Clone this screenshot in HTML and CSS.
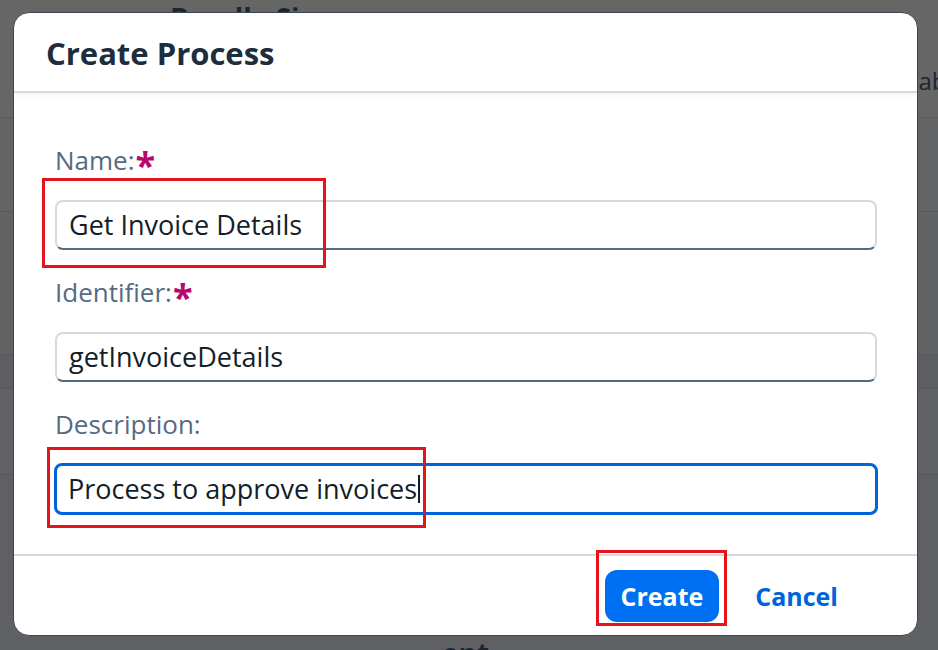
FILE: index.html
```html
<!DOCTYPE html>
<html lang="en">
<head>
<meta charset="utf-8">
<title>Create Process</title>
<link rel="stylesheet" href="styles.css">
</head>
<body>
<div class="backdrop">
  <div class="bg-row bg-head">
    <span class="bg-title">Bundle Sizes</span>
    <span class="bg-side">Table</span>
  </div>
  <div class="bg-row bg-r2"></div>
  <div class="bg-row bg-r3"></div>
  <div class="bg-row bg-band"></div>
  <div class="bg-row bg-r5"></div>
  <div class="bg-row bg-foot"><span class="bg-bottom">ent</span></div>
</div>

<div class="dialog" role="dialog" aria-labelledby="dlg-title">
  <header class="dlg-header">
    <h1 class="dlg-title" id="dlg-title">Create Process</h1>
  </header>
  <div class="dlg-content">
    <div class="field">
      <label class="field-label">Name:<span class="req">*</span></label>
      <div class="input"><span class="input-text">Get Invoice Details</span></div>
    </div>
    <div class="field">
      <label class="field-label">Identifier:<span class="req">*</span></label>
      <div class="input"><span class="input-text">getInvoiceDetails</span></div>
    </div>
    <div class="field">
      <label class="field-label">Description:</label>
      <div class="input input-focused"><span class="input-text">Process to approve invoices</span><span class="caret"></span></div>
    </div>
  </div>
  <footer class="dlg-footer">
    <button class="btn btn-primary" type="button">Create</button>
    <button class="btn btn-transparent" type="button">Cancel</button>
  </footer>
</div>

<div class="mark mark-name"></div>
<div class="mark mark-desc"></div>
<div class="mark mark-create"></div>
</body>
</html>
```

FILE: styles.css
```css
html, body {
  margin: 0;
  padding: 0;
}

body {
  width: 938px;
  height: 650px;
  overflow: hidden;
  position: relative;
  background: #626365;
  font-family: "Open Sans", "Noto Sans", sans-serif;
}

/* ---------- dimmed page behind the dialog ---------- */
.backdrop {
  width: 938px;
  height: 650px;
  display: flex;
  flex-direction: column;
}

.bg-row {
  box-sizing: border-box;
  border-bottom: 1px solid #56585b;
  flex-shrink: 0;
}

.bg-head {
  height: 118px;
  background: #666666;
  display: flex;
  justify-content: space-between;
  align-items: flex-start;
}

.bg-title {
  margin-left: 170px;
  padding-top: 2px;
  font-weight: 700;
  font-size: 28px;
  line-height: 32px;
  color: #1d2630;
}

.bg-side {
  flex-shrink: 0;
  margin-top: 65px;
  margin-right: -28px;
  font-size: 24px;
  line-height: 32px;
  color: #1d2630;
}

.bg-r2 {
  height: 94px;
  background: #636466;
}

.bg-r3 {
  height: 143px;
  background: #626365;
}

.bg-band {
  height: 34px;
  background: #5c5e61;
}

.bg-r5 {
  height: 86px;
  background: #606265;
}

.bg-foot {
  flex: 1;
  border-bottom: 0;
  background: #5e6063;
  padding-top: 162px;
  padding-left: 442px;
}

.bg-bottom {
  font-weight: 700;
  font-size: 28px;
  line-height: 32px;
  color: #1d2630;
}

/* ---------- dialog ---------- */
.dialog {
  position: absolute;
  left: 13px;
  top: 12px;
  width: 905px;
  height: 624px;
  box-sizing: border-box;
  border: 1px solid #3c4450;
  border-radius: 16px;
  background: #ffffff;
  display: flex;
  flex-direction: column;
  overflow: hidden;
}

.dlg-header {
  padding: 22px 32px 20px 32px;
  border-bottom: 2px solid #dadada;
  box-shadow: 0 2px 5px rgba(0, 0, 0, 0.05);
}

.dlg-title {
  margin: 0;
  font-weight: 700;
  font-size: 31px;
  line-height: 36px;
  color: #1d2d3e;
}

.dlg-content {
  flex: 1;
  padding: 49px 40px 0 41px;
  display: flex;
  flex-direction: column;
  gap: 24px;
}

.field {
  display: flex;
  flex-direction: column;
}

.field-label {
  display: block;
  font-size: 26px;
  line-height: 36px;
  color: #556b82;
  margin-bottom: 22px;
}

.req {
  margin-left: 1px;
  font-weight: 700;
  font-size: 36px;
  line-height: 0;
  color: #ba066c;
  vertical-align: -8px;
}

.input {
  box-sizing: border-box;
  height: 50px;
  border: 2px solid #d5dadd;
  border-bottom-color: #556b82;
  border-radius: 8px;
  padding: 0 12px;
  display: flex;
  align-items: center;
  background: #ffffff;
}

.input-focused {
  height: 52px;
  margin: -1px -1px;
  border: 3px solid #0064d9;
  padding: 0 11px;
}

.input-text {
  font-size: 27px;
  line-height: 36px;
  color: #131e29;
  white-space: nowrap;
}

.caret {
  display: inline-block;
  width: 0;
  height: 28px;
  margin-left: 1px;
  border-right: 2px solid #131e29;
}

.dlg-footer {
  border-top: 2px solid #dadada;
  padding: 14px 63px 13px 0;
  display: flex;
  justify-content: flex-end;
  gap: 20px;
}

.btn {
  height: 52px;
  padding: 0 16px;
  border: 0;
  border-radius: 12px;
  font-family: "Open Sans", "Noto Sans", sans-serif;
  font-weight: 700;
  font-size: 25px;
  line-height: 52px;
  cursor: pointer;
}

.btn-primary {
  background: #0070f2;
  color: #ffffff;
}

.btn-transparent {
  background: transparent;
  color: #0064d9;
}

/* ---------- red annotation boxes ---------- */
.mark {
  position: absolute;
  box-sizing: border-box;
  border: 3px solid #e5131b;
}

.mark-name {
  left: 42px;
  top: 178px;
  width: 284px;
  height: 90px;
}

.mark-desc {
  left: 47px;
  top: 447px;
  width: 379px;
  height: 81px;
}

.mark-create {
  left: 596px;
  top: 550px;
  width: 131px;
  height: 76px;
}
```
